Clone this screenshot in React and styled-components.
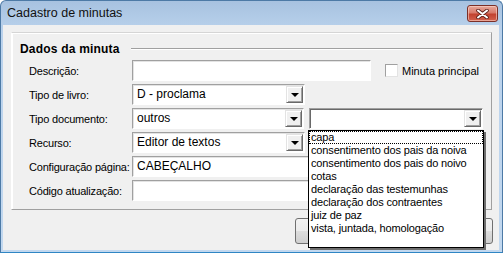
import styled, { createGlobalStyle } from "styled-components";

const GlobalStyle = createGlobalStyle`
  html, body { margin: 0; padding: 0; background: #fff; }
  body { font-family: "Liberation Sans", Arial, sans-serif; font-size: 11px; color: #000; }
  #root { width: 503px; height: 253px; }
`;

const Window = styled.div`
  box-sizing: border-box;
  width: 503px;
  height: 253px;
  display: flex;
  flex-direction: column;
  border: 1px solid #4d7aa6;
  border-bottom-color: #2f86c4;
  border-radius: 6px 6px 0 0;
  background: linear-gradient(to bottom, #a7c2e0 0%, #bad2ec 12%, #c2d8ef 100%);
`;

const TitleBar = styled.div`
  height: 24px;
  display: flex;
  align-items: flex-start;
  justify-content: space-between;
  padding: 0 4px 0 6px;
`;

const Title = styled.span`
  font-size: 12.5px;
  line-height: 24px;
  color: #111;
`;

const CloseButton = styled.div`
  box-sizing: border-box;
  margin-top: 4px;
  width: 31px;
  height: 17px;
  border: 1px solid #7b2f27;
  border-radius: 3px;
  background: linear-gradient(to bottom, #e6a89b 0%, #d87a6a 45%, #c2422f 55%, #d3624e 100%);
  box-shadow: inset 0 0 0 1px rgba(255, 220, 210, 0.55);
  display: flex;
  align-items: center;
  justify-content: center;
`;

const Body = styled.div`
  flex: 1;
  margin: 0 3px 2px 2px;
  background: #f0f0f0;
  padding: 7px 6px 0 8px;
  display: flex;
  flex-direction: column;
`;

const GroupBox = styled.div`
  box-sizing: border-box;
  width: 481px;
  height: 178px;
  border: 1px solid #d5d5d5;
  border-left-color: #fff;
  border-right-color: #a0a0a0;
  border-bottom-color: #a0a0a0;
  box-shadow: inset 1px 1px 0 #fff;
  padding: 7px 8px 0 17px;
  display: flex;
  flex-direction: column;
  gap: 3px;
`;

const GroupHeader = styled.div`
  height: 17px;
  display: flex;
  align-items: center;
  margin-left: -9px;
`;

const HeaderText = styled.span`
  font-weight: bold;
  font-size: 12px;
  letter-spacing: 0.2px;
`;

const HeaderRule = styled.div`
  flex: 1;
  margin-left: 11px;
  height: 1px;
  background: #a0a0a0;
  border-bottom: 1px solid #fff;
`;

const Row = styled.div`
  height: 21px;
  display: flex;
  align-items: center;
`;

const Label = styled.span`
  width: 103px;
  flex-shrink: 0;
  font-size: 11px;
  letter-spacing: -0.2px;
  white-space: nowrap;
`;

const fieldBox = `
  box-sizing: border-box;
  height: 21px;
  background: #fff;
  border: 1px solid;
  border-color: #a0a0a0 #fff #fff #a0a0a0;
`;

const TextBox = styled.div`
  ${fieldBox}
  width: ${(p) => p.$w}px;
  box-shadow: inset 1px 1px 0 #e3e3e3;
  padding: 0 4px;
  font-size: 12px;
  line-height: 19px;
  white-space: nowrap;
  overflow: hidden;
`;

const ComboWrap = styled.div`
  position: relative;
  margin-left: ${(p) => p.$gap || 0}px;
`;

const Combo = styled.div`
  ${fieldBox}
  width: ${(p) => p.$w}px;
  box-shadow: inset 1px 1px 0 ${(p) => (p.$dark ? "#696969" : "#e3e3e3")};
  display: flex;
  align-items: stretch;
  padding: 1px;
`;

const ComboValue = styled.span`
  flex: 1;
  padding-left: 3px;
  font-size: 12px;
  line-height: 17px;
  white-space: nowrap;
  overflow: hidden;
`;

const DropButton = styled.div`
  box-sizing: border-box;
  width: 17px;
  background: #f0f0f0;
  border: 1px solid;
  border-color: #e3e3e3 #696969 #696969 #e3e3e3;
  box-shadow: inset 1px 1px 0 #fff, inset -1px -1px 0 #a0a0a0;
  display: flex;
  align-items: center;
  justify-content: center;
`;

const Arrow = styled.span`
  width: 0;
  height: 0;
  border-left: 4px solid transparent;
  border-right: 4px solid transparent;
  border-top: 4px solid #000;
  margin-top: 1px;
`;

const Check = styled.label`
  display: flex;
  align-items: center;
  margin-left: 14px;
  gap: 4px;
  font-size: 11px;
`;

const CheckBox = styled.span`
  box-sizing: border-box;
  width: 13px;
  height: 13px;
  background: #fff;
  border: 1px solid;
  border-color: #a0a0a0 #e3e3e3 #e3e3e3 #a0a0a0;
`;

const DropList = styled.div`
  position: absolute;
  left: -1px;
  top: calc(100% + 1px);
  box-sizing: border-box;
  width: 176px;
  height: 118px;
  background: #fff;
  border: 1px solid #000;
  box-shadow: 2px 2px 0 #6e6e6e;
  z-index: 5;
`;

const DropItem = styled.div`
  height: 13px;
  line-height: 13px;
  padding-left: 2px;
  font-size: 11px;
  letter-spacing: -0.15px;
  white-space: nowrap;
  outline: ${(p) => (p.$focus ? "1px dotted #000" : "none")};
  outline-offset: -1px;
`;

const ButtonRow = styled.div`
  margin-top: 8px;
  display: flex;
  justify-content: flex-end;
  gap: 6px;
`;

const Button = styled.div`
  box-sizing: border-box;
  width: 96px;
  height: 26px;
  border: 1px solid #707070;
  border-radius: 3px;
  background: linear-gradient(to bottom, #f2f2f2 0%, #ebebeb 50%, #dddddd 51%, #cfcfcf 100%);
`;

const items = [
  "capa",
  "consentimento dos pais da noiva",
  "consentimento dos pais do noivo",
  "cotas",
  "declaração das testemunhas",
  "declaração dos contraentes",
  "juiz de paz",
  "vista, juntada, homologação",
];

const ComboBox = ({ w, value, dark }) => (
  <Combo $w={w} $dark={dark}>
    <ComboValue>{value}</ComboValue>
    <DropButton>
      <Arrow />
    </DropButton>
  </Combo>
);

export default function App() {
  return (
    <>
      <GlobalStyle />
      <Window>
        <TitleBar>
          <Title>Cadastro de minutas</Title>
          <CloseButton>
            <svg width="13" height="10" viewBox="0 0 13 10">
              <path
                d="M2 1.5 L11 8.5 M11 1.5 L2 8.5"
                stroke="#5a1e18"
                strokeWidth="3.6"
                strokeLinecap="round"
              />
              <path
                d="M2 1.5 L11 8.5 M11 1.5 L2 8.5"
                stroke="#fff"
                strokeWidth="2"
                strokeLinecap="round"
              />
            </svg>
          </CloseButton>
        </TitleBar>
        <Body>
          <GroupBox>
            <GroupHeader>
              <HeaderText>Dados da minuta</HeaderText>
              <HeaderRule />
            </GroupHeader>
            <Row>
              <Label>Descrição:</Label>
              <TextBox $w={239} />
              <Check>
                <CheckBox />
                Minuta principal
              </Check>
            </Row>
            <Row>
              <Label>Tipo de livro:</Label>
              <ComboBox w={173} value="D - proclama" />
            </Row>
            <Row>
              <Label>Tipo documento:</Label>
              <ComboBox w={173} value="outros" />
              <ComboWrap $gap={5}>
                <ComboBox w={174} value="" dark />
                <DropList>
                  {items.map((it, i) => (
                    <DropItem key={it} $focus={i === 0}>
                      {it}
                    </DropItem>
                  ))}
                </DropList>
              </ComboWrap>
            </Row>
            <Row>
              <Label>Recurso:</Label>
              <ComboBox w={173} value="Editor de textos" />
            </Row>
            <Row>
              <Label>Configuração página:</Label>
              <TextBox $w={239}>CABEÇALHO</TextBox>
            </Row>
            <Row>
              <Label>Código atualização:</Label>
              <TextBox $w={239} />
            </Row>
          </GroupBox>
          <ButtonRow>
            <Button />
            <Button />
          </ButtonRow>
        </Body>
      </Window>
    </>
  );
}
